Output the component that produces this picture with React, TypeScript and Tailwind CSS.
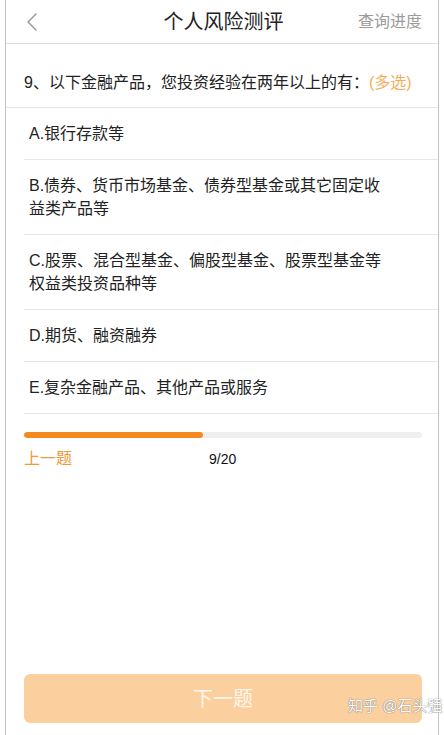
import { useState } from 'react'

const options = [
  'A.银行存款等',
  'B.债券、货币市场基金、债券型基金或其它固定收益类产品等',
  'C.股票、混合型基金、偏股型基金、股票型基金等权益类投资品种等',
  'D.期货、融资融券',
  'E.复杂金融产品、其他产品或服务',
]

export default function App() {
  const [current] = useState(9)
  const total = 20
  const pct = (current / total) * 100

  return (
    <div
      className="w-[444px] h-[735px] bg-white overflow-hidden relative"
      style={{ fontFamily: '"Liberation Sans", "Noto Sans CJK SC", sans-serif' }}
    >
      <div className="ml-[5px] w-[434px] h-full border-x border-[#c4c4c4] flex flex-col">
        {/* 상단 바 */}
        <header className="h-[44px] shrink-0 border-b border-[#dedede] flex items-center justify-between pl-[18px] pr-[16px]">
          <svg width="14" height="22" viewBox="0 0 14 22" className="ml-[1px]">
            <path d="M11 3 L3 11 L11 19" fill="none" stroke="#9a9a9a" strokeWidth="1.5" strokeLinecap="round" strokeLinejoin="round" />
          </svg>
          <h1 className="text-[20px] leading-[28px] text-[#222] ml-[50px]">个人风险测评</h1>
          <span className="text-[16px] leading-[22px] text-[#9b9b9b]">查询进度</span>
        </header>

        {/* 질문 */}
        <div className="h-[64px] shrink-0 border-b border-[#e4e4e4] pl-[18px] pt-[28px]">
          <p className="text-[16px] leading-[22px] text-[#222] whitespace-nowrap">
            9、以下金融产品，您投资经验在两年以上的有：<span className="text-[#f6ad57]">(多选)</span>
          </p>
        </div>

        {/* 옵션 */}
        <ul className="ml-[18px]">
          {options.map(o => (
            <li key={o} className="border-b border-[#e6e6e6] pl-[5px] py-[14px]">
              <p className="max-w-[366px] text-[16px] leading-[23px] text-[#222]">{o}</p>
            </li>
          ))}
        </ul>

        {/* 진행 */}
        <div className="pl-[18px] pr-[16px] pt-[18px]">
          <div className="h-[6px] rounded-full bg-[#efefef] overflow-hidden">
            <div className="h-full rounded-full bg-[#f5891f]" style={{ width: `${pct}%` }} />
          </div>
          <div className="relative mt-[9px] h-[24px] flex items-center">
            <span className="text-[16px] leading-[22px] text-[#f29a3c]">上一题</span>
            <span className="absolute left-[185px] text-[14px] leading-[20px] text-[#111]">
              {current}/{total}
            </span>
          </div>
        </div>

        {/* 다음 */}
        <div className="mt-auto pl-[18px] pr-[16px] pb-[12px]">
          <button className="w-full h-[49px] rounded-[6px] bg-[#fccf9f] text-[20px] text-[#fff6ec]">
            下一题
          </button>
        </div>
      </div>

      <span className="absolute left-[348px] top-[696px] text-[15px] leading-[20px] text-white [text-shadow:0_0_1px_#777,0_0_1px_#777]">
        知乎 @石头强
      </span>
    </div>
  )
}
